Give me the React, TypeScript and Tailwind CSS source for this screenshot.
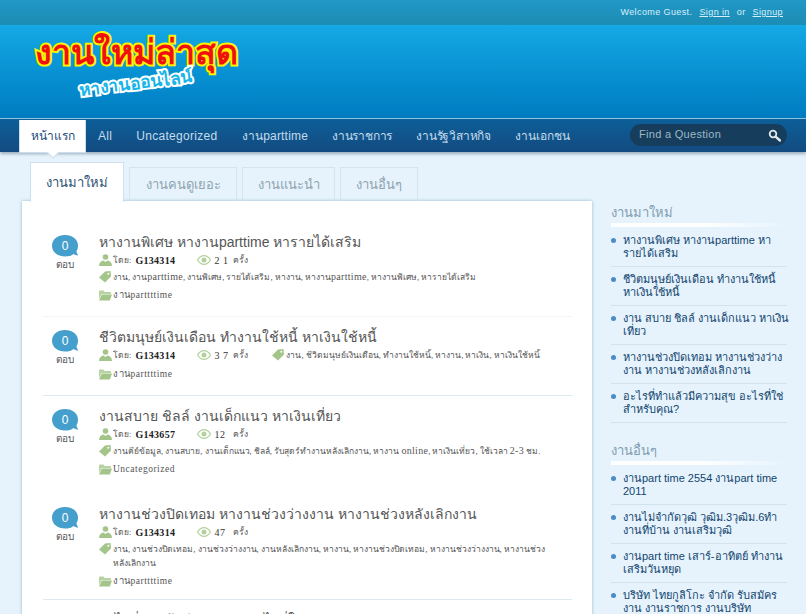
import { Fragment } from "react";

const F = "font-['Tahoma','Liberation_Sans','Noto_Sans',sans-serif]";
const serif = "font-['Liberation_Serif','Noto_Sans',serif]";

function Bubble() {
  return (
    <div className="w-[26px] shrink-0 flex flex-col items-center">
      <div className="relative w-[26px] h-[22px]">
        <svg width="27" height="24" viewBox="0 0 27 24" className="absolute left-0 top-0">
          <path d="M13 0C20.5 0 26 4.4 26 10.5c0 2.6-.7 4.6-1.6 6 .4 1.6 1.1 2.9 2 4-2.2-.1-3.8-.7-5-1.6C19.600 20.800 16.500 21.500 13 21.500 5.500 21.500 0 17 0 10.700 0 4.500 5.500 0 13 0Z" fill="#459fcd" />
        </svg>
        <span className="absolute inset-x-0 top-[3px] text-center text-[12px] leading-[16px] text-white font-['Liberation_Sans',sans-serif]">0</span>
      </div>
      <span className={`mt-[2px] text-[10px] leading-[12px] text-[#555] ${serif}`}>ตอบ</span>
    </div>
  );
}

function UserIcon() {
  return (
    <svg width="13" height="12" viewBox="0 0 13 12" className="shrink-0">
      <circle cx="6.500" cy="3" r="2.800" fill="#a4c589" />
      <path d="M0 12c0-3.500 2-5 4.500-5.500L6.500 8l2-1.500C11 7 13 8.500 13 12Z" fill="#a4c589" />
    </svg>
  );
}
function EyeIcon() {
  return (
    <svg width="14" height="10" viewBox="0 0 14 10" className="shrink-0">
      <path d="M.5 5C2.300 2 4.500.6 7 .6S11.700 2 13.500 5C11.700 8 9.500 9.400 7 9.400S2.300 8 .5 5Z" fill="none" stroke="#b3d19c" strokeWidth="1.200" />
      <circle cx="7" cy="5" r="2.500" fill="#b3d19c" />
    </svg>
  );
}
function TagIcon() {
  return (
    <svg width="12" height="12" viewBox="0 0 12 12" className="shrink-0">
      <path d="M0 6.500 6 .5l5.500-.5.500 5.500-6 6Z" fill="#a4c589" />
      <circle cx="9.300" cy="2.700" r="1" fill="#fff" />
    </svg>
  );
}
function FolderIcon() {
  return (
    <svg width="13" height="11" viewBox="0 0 13 11" className="shrink-0">
      <path d="M0 1.500C0 .8.400.5 1 .5h3.500l1 1.500H11c.6 0 1 .3 1 1V4H2.500L0 9Z" fill="#b7d3a2" />
      <path d="M2.800 4.500H13L10.800 10.500H0Z" fill="#a4c589" />
    </svg>
  );
}

function Tags({ text }: { text: string }) {
  const parts = text.split(/([A-Za-z0-9-]+)/);
  return (
    <>
      {parts.map((s, i) =>
        i % 2 === 1 ? (
          <span key={i} className="text-[10px] tracking-[0.300px]">{s}</span>
        ) : (
          <Fragment key={i}>{s}</Fragment>
        )
      )}
    </>
  );
}

type Post = { title: string; by: string; views: string; tags: string; cat: string; inline?: boolean; h: string };
const posts: Post[] = [
  { title: "หางานพิเศษ หางานparttime หารายได้เสริม", by: "G134314", views: "2 1", tags: "งาน, งานparttime, งานพิเศษ, รายได้เสริม, หางาน, หางานparttime, หางานพิเศษ, หารายได้เสริม", cat: "งานparttttime", h: "h-[95px] border-[#f1f5f8]" },
  { title: "ชีวิตมนุษย์เงินเดือน ทำงานใช้หนี้ หาเงินใช้หนี้", by: "G134314", views: "3 7", tags: "งาน, ชีวิตมนุษย์เงินเดือน, ทำงานใช้หนี้, หางาน, หาเงิน, หาเงินใช้หนี้", cat: "งานparttttime", inline: true, h: "h-[79px] border-[#dfe9f0]" },
  { title: "งานสบาย ชิลล์ งานเด็กแนว หาเงินเที่ยว", by: "G143657", views: "12", tags: "งานคีย์ข้อมูล, งานสบาย, งานเด็กแนว, ชิลล์, รับสุดร์ทำงานหลังเลิกงาน, หางาน online, หาเงินเที่ยว, ใช้เวลา 2-3 ชม.", cat: "Uncategorized", h: "h-[98px] border-transparent" },
  { title: "หางานช่วงปิดเทอม หางานช่วงว่างงาน หางานช่วงหลังเลิกงาน", by: "G134314", views: "47", tags: "งาน, งานช่วงปิดเทอม, งานช่วงว่างงาน, งานหลังเลิกงาน, หางาน, หางานช่วงปิดเทอม, หางานช่วงว่างงาน, หางานช่วงหลังเลิกงาน", cat: "งานparttttime", h: "h-[106px] border-[#dfe9f0]" },
];

function PostRow({ p }: { p: Post }) {
  return (
    <div className={`flex gap-[21px] pl-[9px] pt-[15px] border-b ${p.h}`}>
      <div className="-mt-[2px]"><Bubble /></div>
      <div className="flex-1 min-w-0 -mt-[5px]">
        <div className={`text-[14px] leading-[20px] text-[#555] whitespace-nowrap ${F}`}>{p.title}</div>
        <div className={`flex items-center h-[16px] text-[8.500px] text-[#555] ${serif}`}>
          <UserIcon />
          <span className="ml-[1px]">โดย:</span>
          <b className="ml-[4px] w-[62px] text-[10px] tracking-[0.300px] text-[#222]">{p.by}</b>
          <EyeIcon />
          <span className="ml-[3px] w-[19px] text-[10px] tracking-[0.500px] text-[#333]">{p.views}</span>
          <span className="ml-[0px]">ครั้ง</span>
          {p.inline && (
            <span className="flex items-center ml-[24px] gap-[2px]">
              <TagIcon />
              <span className="whitespace-nowrap"><Tags text={p.tags} /></span>
            </span>
          )}
        </div>
        {!p.inline && (
          <div className={`flex gap-[2px] mt-[2px] text-[8.500px] leading-[14px] text-[#555] ${serif}`}>
            <span className="pt-[1px]"><TagIcon /></span>
            <span className="w-[442px]"><Tags text={p.tags} /></span>
          </div>
        )}
        <div className={`flex items-center gap-[1px] mt-[3px] h-[16px] text-[9.500px] tracking-[0.500px] text-[#555] ${serif}`}>
          <FolderIcon />
          <span>{p.cat}</span>
        </div>
      </div>
    </div>
  );
}

function SideBlock({ title, items }: { title: string; items: string[][] }) {
  return (
    <div className="mb-[19px]">
      <div className={`text-[13px] leading-[18px] text-[#7f9db1] ${F}`}>{title}</div>
      <div className="h-[4px] mt-[1px] bg-gradient-to-r from-[#ffffff] via-[#ffffff] to-[#e6f3fc]" />
      <ul className="mt-[7px]">
        {items.map((it, i) => (
          <li key={i} className="flex gap-[7px] pb-[6px] mb-[6px] border-b border-[#d3e3ee]">
            <span className="mt-[4px] w-[5px] h-[5px] rounded-full bg-[#4b8cc4] shrink-0" />
            <span className={`text-[11px] leading-[13px] whitespace-nowrap text-[#12456f] ${F}`}>
              {it[0]}<br />{it[1]}
            </span>
          </li>
        ))}
      </ul>
    </div>
  );
}

export default function App() {
  const nav = [
    { t: "All", c: "tracking-[0.300px]" },
    { t: "Uncategorized", c: "tracking-[0.300px]" },
    { t: "งานparttime", c: "tracking-[0.200px]" },
    { t: "งานราชการ", c: "tracking-[-0.200px]" },
    { t: "งานรัฐวิสาหกิจ", c: "tracking-[-0.200px]" },
    { t: "งานเอกชน", c: "" },
  ];
  return (
    <div className={`w-[806px] h-[614px] overflow-hidden bg-[#e6f3fc] ${F}`}>
      <div className="h-[25px] bg-gradient-to-b from-[#2198c6] to-[#1c8cb4] flex items-center justify-end pr-[23px] text-[9px] tracking-[0.400px] text-[#d9f0fa] font-['Liberation_Sans',sans-serif]">
        <span>Welcome Guest.</span>
        <span className="ml-[7px] underline">Sign in</span>
        <span className="ml-[7px]">or</span>
        <span className="ml-[7px] underline">Signup</span>
      </div>
      <div className="h-[93px] bg-gradient-to-b from-[#14a9e5] to-[#007cc1] pl-[35px] pt-[5px] overflow-hidden">
        <div className="w-[210px] h-[80px] flex flex-col">
          <span className={"text-[34px] leading-[44px] font-bold text-[#f01010] whitespace-nowrap [-webkit-text-stroke:4px_#fff200] [paint-order:stroke_fill] " + F}>งานใหม่ล่าสุด</span>
          <span className={"ml-[44px] -mt-[1px] w-max text-[17px] leading-[22px] font-bold text-[#18b5e8] whitespace-nowrap [-webkit-text-stroke:4px_#fff] [paint-order:stroke_fill] -rotate-[7deg] " + F}>หางานออนไลน์</span>
        </div>
      </div>
      <div className="relative h-[34px] border-t border-[#8cc4e0] bg-gradient-to-b from-[#0c5f99] to-[#124b80] shadow-[0_2px_3px_rgba(70,90,110,0.45)] flex pl-[19px]">
        <div className="relative mt-[1px] w-[67px] h-[33px] bg-white border-x border-b border-[#cbdeed] flex items-center justify-center text-[12px] text-[#1a4a78]">
          หน้าแรก
          <span className="absolute left-[29px] -bottom-[5px] w-[8px] h-[8px] rotate-45 bg-white border-r border-b border-[#cbdeed]" />
        </div>
        <div className="flex ml-[12px] gap-[24px] items-center h-[33px] text-[12px] text-[#c3dcec]">
          {nav.map((n) => <span key={n.t} className={`whitespace-nowrap ${n.c}`}>{n.t}</span>)}
        </div>
        <div className="absolute right-[19px] top-[5px] w-[157px] h-[22px] rounded-full bg-[#163d5c] flex items-center justify-between pl-[9px] pr-[6px] text-[11px] tracking-[0.300px] text-[#9db8c8] font-['Liberation_Sans',sans-serif]">
          <span className="-mt-[1px]">Find a Question</span>
          <svg width="13" height="13" viewBox="0 0 13 13">
            <circle cx="5" cy="5" r="3.300" fill="none" stroke="#e4e8ea" strokeWidth="1.800" />
            <path d="M7.800 7.800 12 11.500" stroke="#e4e8ea" strokeWidth="2.400" strokeLinecap="round" />
          </svg>
        </div>
      </div>

      <div className="flex pl-[22px] pt-[9px]">
        <div className="w-[570px] shrink-0">
          <div className="flex items-end h-[40px] pl-[8px] text-[13px]">
            <div className="relative z-10 w-[94px] h-[40px] -mb-[1px] bg-white border-x border-t border-[#cddff0] flex items-center justify-center text-[#2c5070]">งานมาใหม่</div>
            <div className="ml-[5px] w-[108px] h-[34px] border-x border-t border-[#d3e4f0] flex items-center justify-center text-[#8fa3b0]">งานคนดูเยอะ</div>
            <div className="ml-[5px] w-[93px] h-[34px] border-x border-t border-[#d3e4f0] flex items-center justify-center text-[#8fa3b0]">งานแนะนำ</div>
            <div className="ml-[5px] w-[78px] h-[34px] border-x border-t border-[#d3e4f0] flex items-center justify-center text-[#8fa3b0]">งานอื่นๆ</div>
          </div>
          <div className="bg-white h-[420px] shadow-[0_0_3px_rgba(130,170,205,0.8)] pl-[21px] pr-[20px] pt-[21px]">
            {posts.map((p) => <PostRow key={p.title} p={p} />)}
            <div className={`pl-[56px] pt-[10px] text-[14px] leading-[20px] text-[#555] ${F}`}>อะไรที่ทำแล้วมีความสุข อะไรที่ใช่สำหรับคุณ?</div>
          </div>
        </div>
        <div className="ml-[19px] w-[176px] shrink-0 pt-[43px]">
          <SideBlock title="งานมาใหม่" items={[
            ["หางานพิเศษ หางานparttime หา", "รายได้เสริม"],
            ["ชีวิตมนุษย์เงินเดือน ทำงานใช้หนี้", "หาเงินใช้หนี้"],
            ["งาน สบาย ชิลล์ งานเด็กแนว หาเงิน", "เที่ยว"],
            ["หางานช่วงปิดเทอม หางานช่วงว่าง", "งาน หางานช่วงหลังเลิกงาน"],
            ["อะไรที่ทำแล้วมีความสุข อะไรที่ใช่", "สำหรับคุณ?"],
          ]} />
          <SideBlock title="งานอื่นๆ" items={[
            ["งานpart time 2554 งานpart time", "2011"],
            ["งานไม่จำกัดวุฒิ วุฒิม.3วุฒิม.6ทำ", "งานที่บ้าน งานเสริมวุฒิ"],
            ["งานpart time เสาร์-อาทิตย์ ทำงาน", "เสริมวันหยุด"],
            ["บริษัท ไทยกูลิโกะ จำกัด รับสมัคร", "งาน งานราชการ งานบริษัท"],
          ]} />
        </div>
      </div>
    </div>
  );
}
